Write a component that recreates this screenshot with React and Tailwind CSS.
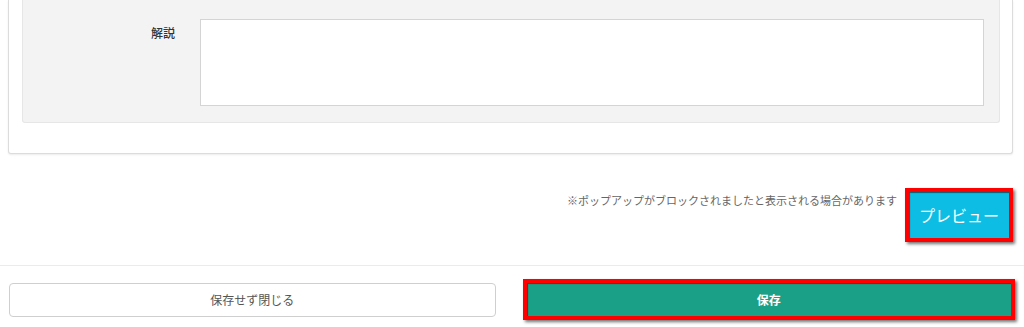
import React from 'react';

const jp = { fontFamily: '"Noto Sans CJK JP", "Liberation Sans", sans-serif' };

function DescriptionCard() {
    return (
        <div className="mx-[8px] mr-[11px] bg-white border border-t-0 border-[#dcdcdc] rounded-b-[3px] shadow-[0_1px_2px_rgba(0,0,0,0.08)] pb-[30px]">
            <div className="ml-[13px] mr-[12px] bg-[#f3f3f3] border border-t-0 border-[#e6e6e6] rounded-b-[3px] pt-[19px] pb-[16px] flex">
                <div className="w-[177px] shrink-0 text-right pr-[25px] pt-[5px] text-[12px] font-medium text-[#333]">
                    解説
                </div>
                <textarea className="h-[87px] flex-1 mr-[15px] bg-white border border-[#d4d4d4] resize-none outline-none" />
            </div>
        </div>
    );
}

function PreviewRow() {
    return (
        <div className="flex justify-end items-start mt-[34px] pr-[11px]">
            <p className="text-[11px] text-[#666] mt-[4px] mr-[8px]">
                ※ポップアップがブロックされましたと表示される場合があります
            </p>
            <div className="border-4 border-[#ff0000] shadow-[2px_2px_3px_rgba(0,0,0,0.55)]">
                <button className="w-[100px] h-[46px] bg-[#0dbde3] text-white text-[16px] shadow-[inset_1px_1px_1px_rgba(0,0,0,0.5)]">
                    プレビュー
                </button>
            </div>
        </div>
    );
}

function Footer() {
    return (
        <div className="mt-[23px] border-t border-[#ebebeb] pt-[13px] pl-[9px] pr-[9px] flex items-center gap-[27px]">
            <button className="flex-1 h-[34px] bg-white border border-[#cfcfcf] rounded-[4px] text-[12px] text-[#555]">
                保存せず閉じる
            </button>
            <div className="flex-1 border-4 border-[#ff0000] shadow-[2px_2px_3px_rgba(0,0,0,0.55)]">
                <button className="w-full h-[33px] bg-[#1aa086] text-white text-[12px] font-bold shadow-[inset_1px_1px_1px_rgba(0,0,0,0.5)]">
                    保存
                </button>
            </div>
        </div>
    );
}

export default function App() {
    return (
        <div className="w-[1024px] h-[327px] bg-white overflow-hidden" style={jp}>
            <DescriptionCard />
            <PreviewRow />
            <Footer />
        </div>
    );
}
